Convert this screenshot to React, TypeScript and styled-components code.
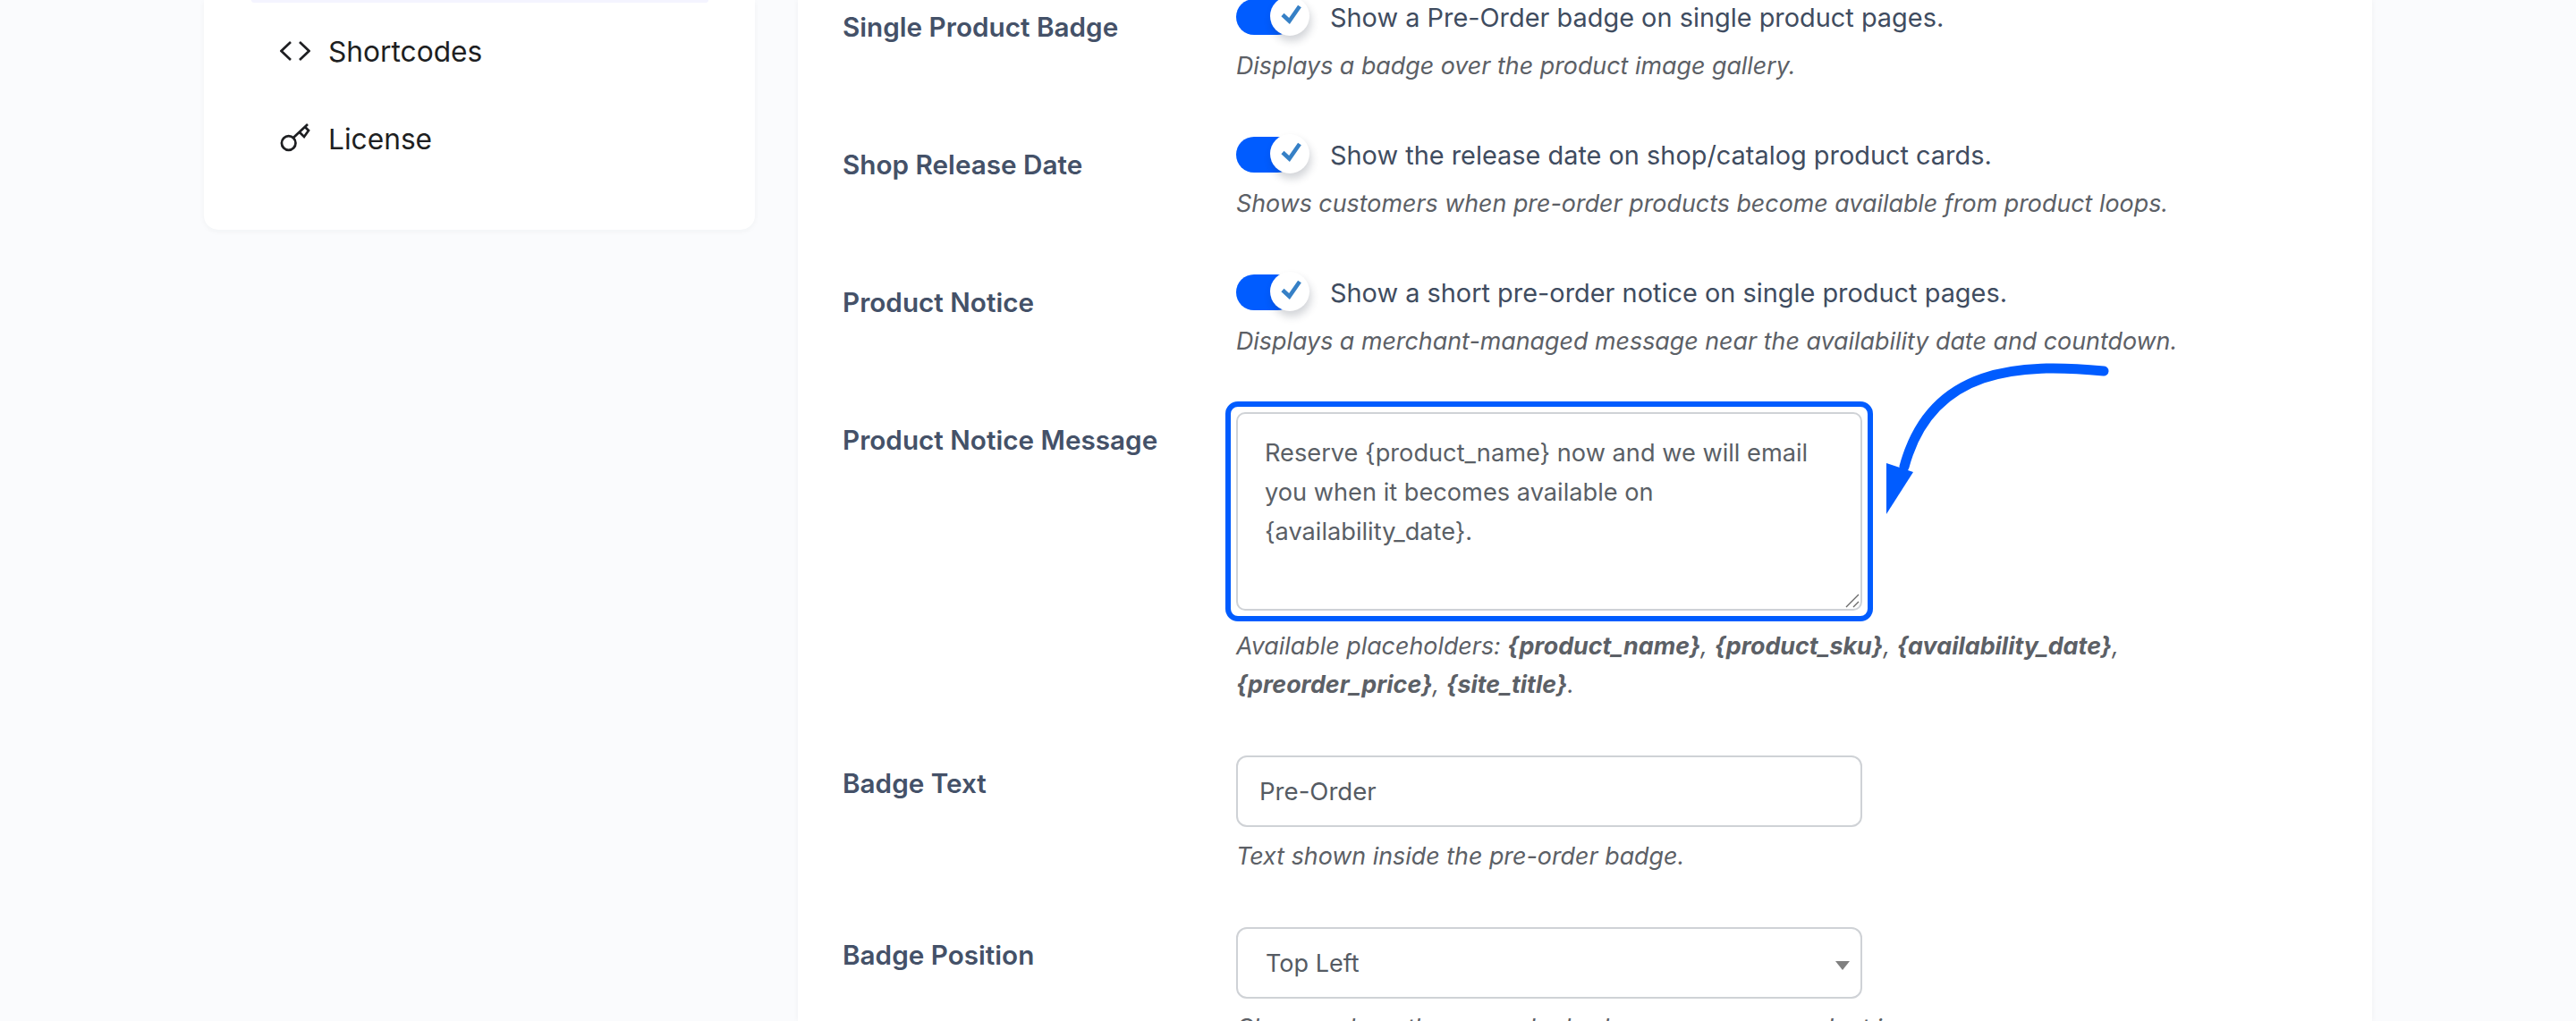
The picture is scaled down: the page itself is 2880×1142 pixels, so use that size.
import React from 'react';
import styled, { createGlobalStyle } from 'styled-components';

const GlobalStyle = createGlobalStyle`
  html, body {
    margin: 0;
    padding: 0;
    background: #fafbfd;
    font-family: Inter, "Liberation Sans", sans-serif;
  }
  * {
    box-sizing: border-box;
  }
`;

const Page = styled.div`
  width: 2880px;
  height: 1142px;
  overflow: hidden;
  display: flex;
  align-items: flex-start;
  gap: 48px;
  padding-left: 228px;
  background: #fafbfd;
`;

const Sidebar = styled.aside`
  width: 616px;
  height: 257px;
  flex: none;
  background: #fff;
  border-radius: 0 0 16px 16px;
  box-shadow: 0 2px 6px rgba(30, 40, 60, 0.04);
  padding: 0 52px 0 53px;
`;

const ActiveEdge = styled.div`
  height: 3px;
  background: #f4f4ff;
  border-radius: 0 0 6px 6px;
`;

const NavList = styled.nav`
  display: flex;
  flex-direction: column;
  gap: 50px;
  padding: 30px 0 0 32px;
`;

const NavItem = styled.a`
  display: flex;
  align-items: center;
  gap: 20px;
  height: 48px;
  font-size: 31.7px;
  color: #1e1f22;
`;

const Main = styled.main`
  width: 1760px;
  height: 1142px;
  flex: none;
  background: #fff;
  box-shadow: 0 0 6px rgba(30, 40, 60, 0.05);
  padding: 0 50px;
  position: relative;
  overflow: hidden;
`;

const Rows = styled.div`
  margin-top: -1px;
  display: flex;
  flex-direction: column;
  gap: 58px;
`;

const Row = styled.div`
  display: grid;
  grid-template-columns: 440px 1fr;
`;

const Label = styled.div`
  font-size: 29.7px;
  font-weight: 600;
  line-height: 44px;
  padding-top: 9px;
  color: #445168;
`;

const Control = styled.div`
  min-width: 0;
`;

const ToggleLine = styled.div`
  display: flex;
  align-items: center;
  gap: 23px;
  height: 40px;
  margin-bottom: 13px;
  font-size: 28.9px;
  white-space: nowrap;
  color: #3f4c60;
`;

const Toggle = styled.span`
  position: relative;
  display: block;
  width: 82px;
  height: 40px;
  flex: none;
`;

const Track = styled.span`
  display: block;
  width: 66px;
  height: 40px;
  border-radius: 20px;
  background: #005cff;
`;

const Knob = styled.span`
  position: absolute;
  left: 38px;
  top: -3px;
  width: 44px;
  height: 44px;
  border-radius: 50%;
  background: #fff;
  box-shadow: 2px 6px 10px rgba(30, 40, 60, 0.2);
`;

const Description = styled.p`
  margin: 11px 0 0;
  font-size: 26.85px;
  font-style: italic;
  line-height: 43px;
  white-space: nowrap;
  color: #5c6066;

  strong {
    font-weight: 700;
  }
`;

const TextArea = styled.div`
  width: 700px;
  height: 222px;
  margin-bottom: 18px;
  padding: 22px 30px;
  border: 2px solid #cfd2d6;
  border-radius: 10px;
  background: #fff;
  font-size: 27.2px;
  line-height: 44px;
  color: #5a5f66;
  position: relative;
`;

const ResizeGrip = styled.svg`
  position: absolute;
  right: 1px;
  bottom: 1px;
`;

const Highlight = styled.div`
  position: absolute;
  left: -12px;
  top: -12px;
  width: 724px;
  height: 246px;
  border: 6px solid #005cff;
  border-radius: 14px;
  pointer-events: none;
`;

const TextAreaWrap = styled.div`
  position: relative;
  width: 700px;
`;

const InputBox = styled.div<{ $inset: number; $size: number }>`
  position: relative;
  width: 700px;
  height: 80px;
  padding-left: ${(p) => p.$inset}px;
  display: flex;
  align-items: center;
  border: 2px solid #cfd2d6;
  border-radius: 12px;
  background: #fff;
  font-size: ${(p) => p.$size}px;
  color: #555b63;
`;

const SelectCaret = styled.span`
  position: absolute;
  right: 12px;
  top: 36px;
  width: 0;
  height: 0;
  border-left: 8px solid transparent;
  border-right: 8px solid transparent;
  border-top: 10px solid #808080;
`;

const Arrow = styled.svg`
  position: absolute;
  left: 1217px;
  top: 400px;
`;

const Check = () => (
  <svg width="44" height="44" viewBox="0 0 44 44">
    <path d="M14 20.5 L21.5 27.5 L33 11" fill="none" stroke="#3680c6" strokeWidth="4.6" />
  </svg>
);

const SwitchRow = ({ text }: { text: string }) => (
  <ToggleLine>
    <Toggle>
      <Track />
      <Knob>
        <Check />
      </Knob>
    </Toggle>
    {text}
  </ToggleLine>
);

const App = () => {
  return (
    <>
      <GlobalStyle />
      <Page>
        <Sidebar>
          <ActiveEdge />
          <NavList>
            <NavItem>
              <svg width="34" height="24" viewBox="0 0 34 24" fill="none" stroke="#1e1f22" strokeWidth="2.7">
                <path d="M12 2 L1.5 12 L12 22" />
                <path d="M22 2 L32.5 12 L22 22" />
              </svg>
              Shortcodes
            </NavItem>
            <NavItem>
              <svg width="34" height="34" viewBox="0 0 34 34" fill="none" stroke="#1e1f22" strokeWidth="2.7">
                <circle cx="9.7" cy="22" r="7.8" />
                <path d="M15 16 L31 1 M22 10 L27 15 L32 8 L28.5 4.5" />
              </svg>
              License
            </NavItem>
          </NavList>
        </Sidebar>
        <Main>
          <Rows>
            <Row>
              <Label>Single Product Badge</Label>
              <Control>
                <SwitchRow text="Show a Pre-Order badge on single product pages." />
                <Description>Displays a badge over the product image gallery.</Description>
              </Control>
            </Row>
            <Row>
              <Label>Shop Release Date</Label>
              <Control>
                <SwitchRow text="Show the release date on shop/catalog product cards." />
                <Description>Shows customers when pre-order products become available from product loops.</Description>
              </Control>
            </Row>
            <Row>
              <Label>Product Notice</Label>
              <Control>
                <SwitchRow text="Show a short pre-order notice on single product pages." />
                <Description>Displays a merchant-managed message near the availability date and countdown.</Description>
              </Control>
            </Row>
            <Row>
              <Label>Product Notice Message</Label>
              <Control>
                <TextAreaWrap>
                  <TextArea>
                    Reserve {'{product_name}'} now and we will email
                    <br />
                    you when it becomes available on
                    <br />
                    {'{availability_date}'}.
                    <ResizeGrip width="16" height="16" viewBox="0 0 16 16" fill="none" stroke="#6a6a6a" strokeWidth="1.4">
                      <path d="M1 15 L15 1 M9 15 L15 9" />
                    </ResizeGrip>
                  </TextArea>
                  <Highlight />
                </TextAreaWrap>
                <Description>
                  Available placeholders: <strong>{'{product_name}'}</strong>, <strong>{'{product_sku}'}</strong>,{' '}
                  <strong>{'{availability_date}'}</strong>,
                  <br />
                  <strong>{'{preorder_price}'}</strong>, <strong>{'{site_title}'}</strong>.
                </Description>
              </Control>
            </Row>
            <Row>
              <Label>Badge Text</Label>
              <Control>
                <InputBox $inset={24} $size={27.6}>Pre-Order</InputBox>
                <Description>Text shown inside the pre-order badge.</Description>
              </Control>
            </Row>
            <Row>
              <Label>Badge Position</Label>
              <Control>
                <InputBox $inset={31} $size={27}>
                  Top Left
                  <SelectCaret />
                </InputBox>
                <Description>Choose where the pre-order badge appears on product images.</Description>
              </Control>
            </Row>
          </Rows>
          <Arrow width="260" height="190" viewBox="0 0 260 190">
            <path d="M243 15 C150 6 50 10 20 122" fill="none" stroke="#005cff" strokeWidth="11" strokeLinecap="round" />
            <path d="M0 118 L30 128 L0 175 Z" fill="#005cff" />
          </Arrow>
        </Main>
      </Page>
    </>
  );
};

export default App;
